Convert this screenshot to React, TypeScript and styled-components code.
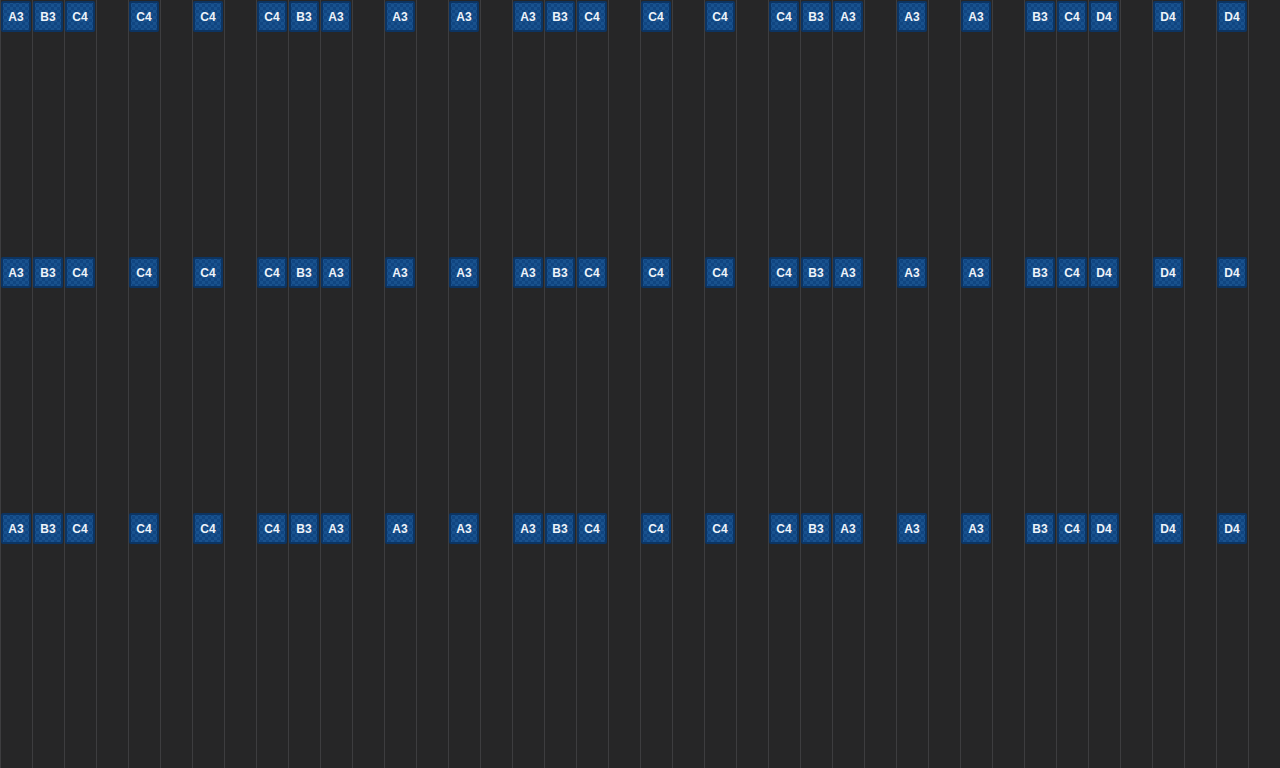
import * as React from 'react';
import styled, { createGlobalStyle } from 'styled-components';

const PATTERN: (string | null)[] = [
  'A3', 'B3', 'C4', null, 'C4', null, 'C4', null,
  'C4', 'B3', 'A3', null, 'A3', null, 'A3', null,
  'A3', 'B3', 'C4', null, 'C4', null, 'C4', null,
  'C4', 'B3', 'A3', null, 'A3', null, 'A3', null,
  'B3', 'C4', 'D4', null, 'D4', null, 'D4', null,
];

const ROWS = 3;

export default function App() {
  return (
    <>
      <GlobalStyle />
      <Roll>
        {Array.from({ length: ROWS }).map((_, r) => (
          <Track key={r}>
            {PATTERN.map((note, i) => (
              <Step key={i}>{note && <Note>{note}</Note>}</Step>
            ))}
          </Track>
        ))}
      </Roll>
    </>
  );
}

const GlobalStyle = createGlobalStyle`
  html, body {
    margin: 0;
    padding: 0;
    background: #262627;
    overflow: hidden;
  }
  body {
    font-family: 'Liberation Sans', Arial, sans-serif;
  }
`;

const Roll = styled.div`
  width: 1280px;
  height: 768px;
  display: flex;
  flex-direction: column;
  background: #262627;
`;

const Track = styled.div`
  height: 256px;
  display: grid;
  grid-template-columns: repeat(40, 32px);
`;

const Step = styled.div`
  border-left: 1px solid #3d3d3f;
  padding-top: 1px;
  box-sizing: border-box;
`;

const Note = styled.div`
  width: 30px;
  height: 31px;
  box-sizing: border-box;
  border: 2px solid #0c3462;
  border-radius: 2px;
  background-color: #134a86;
  background-image: repeating-conic-gradient(
    #19528e 0% 25%,
    #104581 0% 50%
  );
  background-size: 6px 6px;
  background-position: 1px 1px;
  color: #eef3f9;
  font-size: 12px;
  font-weight: 700;
  padding-top: 1px;
  display: flex;
  align-items: center;
  justify-content: center;
`;
